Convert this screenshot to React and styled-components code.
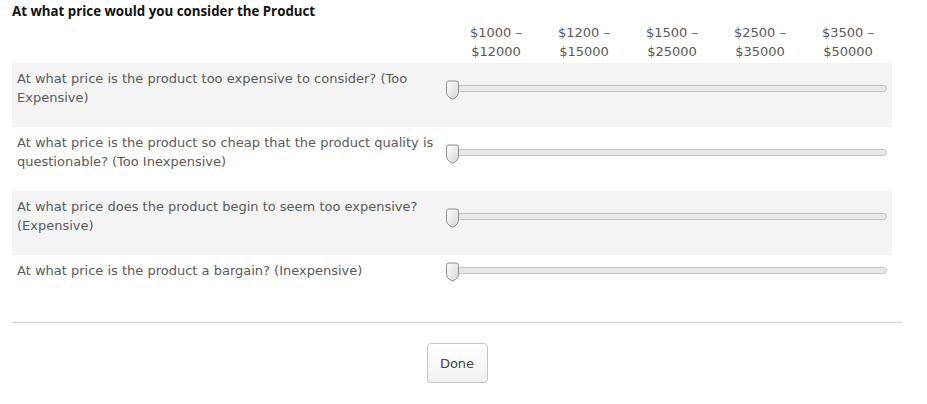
import styled, { createGlobalStyle } from "styled-components";

const GlobalStyle = createGlobalStyle`
  body {
    margin: 0;
    background: #fff;
    font-family: "DejaVu Sans", Verdana, sans-serif;
  }
`;

const ranges = [
  ["$1000 –", "$12000"],
  ["$1200 –", "$15000"],
  ["$1500 –", "$25000"],
  ["$2500 –", "$35000"],
  ["$3500 –", "$50000"],
];

const questions = [
  "At what price is the product too expensive to consider? (Too Expensive)",
  "At what price is the product so cheap that the product quality is questionable? (Too Inexpensive)",
  "At what price does the product begin to seem too expensive? (Expensive)",
  "At what price is the product a bargain? (Inexpensive)",
];

const Handle = () => (
  <HandleSvg width="15" height="20" viewBox="0 0 15 20">
    <defs>
      <linearGradient id="hg" x1="0" y1="0" x2="1" y2="1">
        <stop offset="0" stopColor="#ffffff" />
        <stop offset="1" stopColor="#d6d6d6" />
      </linearGradient>
    </defs>
    <path
      d="M1.5 3.5 Q1.5 1 4 1 H11 Q13.5 1 13.5 3.5 V12.5 Q13.5 15.5 10.5 17.5 L7.5 19 L4.5 17.5 Q1.5 15.5 1.5 12.5 Z"
      fill="url(#hg)"
      stroke="#8e8e8e"
      strokeWidth="1"
    />
  </HandleSvg>
);

const App = () => {
  return (
    <>
      <GlobalStyle />
      <Page>
        <Title>At what price would you consider the Product</Title>
        <HeaderRow>
          <Spacer />
          <Labels>
            {ranges.map(([a, b]) => (
              <Label key={a}>
                {a}
                <br />
                {b}
              </Label>
            ))}
          </Labels>
        </HeaderRow>
        {questions.map((q, i) => (
          <Row key={q} shaded={i % 2 === 0}>
            <Question>{q}</Question>
            <SliderCell>
              <Track>
                <Handle />
              </Track>
            </SliderCell>
          </Row>
        ))}
        <Divider />
        <Footer>
          <DoneButton>Done</DoneButton>
        </Footer>
      </Page>
    </>
  );
};

export default App;

const Page = styled.div`
  width: 890px;
  margin-left: 12px;
  padding-top: 3px;
`;

const Title = styled.h1`
  margin: 0;
  font-family: "Open Sans", sans-serif;
  font-size: 13.3px;
  font-weight: 700;
  line-height: 17px;
  color: #111;
`;

const HeaderRow = styled.div`
  display: flex;
  width: 880px;
  margin-top: 3px;
`;

const Spacer = styled.div`
  width: 440px;
`;

const Labels = styled.div`
  display: grid;
  grid-template-columns: repeat(5, 88px);
  padding-bottom: 2px;
`;

const Label = styled.div`
  text-align: center;
  font-size: 13px;
  line-height: 19px;
  color: #5a5a5a;
`;

const Row = styled.div`
  display: flex;
  align-items: center;
  width: 880px;
  box-sizing: border-box;
  padding: 6px 0 20px;
  background: ${(p) => (p.shaded ? "#f4f4f4" : "#fff")};
`;

const Question = styled.div`
  width: 435px;
  box-sizing: border-box;
  padding: 0 8px 0 5px;
  font-size: 13px;
  line-height: 19px;
  color: #5a5a5a;
`;

const SliderCell = styled.div`
  flex: 1;
  padding: 0 5px 0 0;
`;

const Track = styled.div`
  position: relative;
  height: 5px;
  border: 1px solid #c4c4c4;
  border-radius: 4px;
  background: #e8e8e8;
`;

const HandleSvg = styled.svg`
  position: absolute;
  left: -3px;
  top: -6px;
  display: block;
`;

const Divider = styled.hr`
  margin: 22px 0 0;
  border: 0;
  border-top: 1px solid #cfcfcf;
`;

const Footer = styled.div`
  display: flex;
  justify-content: center;
  padding-top: 20px;
`;

const DoneButton = styled.button`
  width: 61px;
  height: 40px;
  border: 1px solid #c6c6c6;
  border-radius: 4px;
  background: linear-gradient(#ffffff, #f1f1f1);
  box-shadow: 0 1px 1px rgba(0, 0, 0, 0.08);
  font-family: "DejaVu Sans", Verdana, sans-serif;
  font-size: 13px;
  color: #444;
  cursor: pointer;
`;
